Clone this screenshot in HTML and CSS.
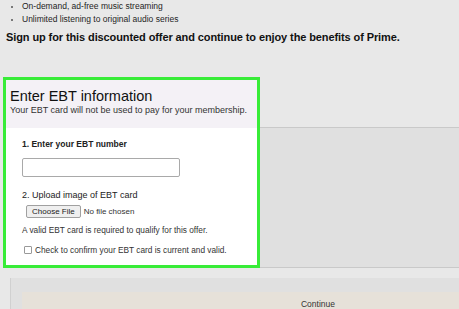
FILE: index.html
```html
<!DOCTYPE html>
<html lang="en">
<head>
    <meta charset="UTF-8">
    <meta name="viewport" content="width=device-width, initial-scale=1.0">
    <title>Prime EBT Offer</title>
    <link rel="stylesheet" href="styles.css">
</head>
<body>

<div class="intro">
    <ul class="perks">
        <li>On-demand, ad-free music streaming</li>
        <li>Unlimited listening to original audio series</li>
    </ul>
    <p class="pitch">Sign up for this discounted offer and continue to enjoy the benefits of Prime.</p>
</div>

<div class="ebt-row">
    <div class="ebt-box">
        <div class="ebt-head">
            <h2>Enter EBT information</h2>
            <p>Your EBT card will not be used to pay for your membership.</p>
        </div>
        <div class="ebt-body">
            <div class="step-label">1. Enter your EBT number</div>
            <input type="text" class="ebt-input">
            <div class="step-label step-upload">2. Upload image of EBT card</div>
            <div class="file-row">
                <span class="file-btn">Choose File</span>
                <span class="file-name">No file chosen</span>
            </div>
            <div class="note">A valid EBT card is required to qualify for this offer.</div>
            <label class="confirm">
                <span class="check"></span>
                Check to confirm your EBT card is current and valid.
            </label>
        </div>
    </div>
    <div class="ebt-side">
        <div class="side-top"></div>
        <div class="side-rest"></div>
    </div>
</div>

<div class="continue-panel">
    <div class="continue-btn">Continue</div>
</div>

</body>
</html>
```

FILE: styles.css
```css
body {
    margin: 0;
    background-color: #e8e8e8;
    font-family: "Liberation Sans", Arial, sans-serif;
    color: #1e1e1e;
    overflow: hidden;
    height: 309px;
}

.intro {
    height: 77px;
}

.perks {
    margin: 0;
    padding: 0 0 0 22px;
    font-size: 8.5px;
    line-height: 13px;
    white-space: nowrap;
}

.perks li::marker {
    font-size: 8px;
    color: #555;
}

.pitch {
    margin: 3px 0 0 6px;
    font-size: 11px;
    letter-spacing: -0.1px;
    font-weight: bold;
    line-height: 16px;
    color: #111;
    white-space: nowrap;
}

.ebt-row {
    display: flex;
    height: 191px;
}

.ebt-box {
    width: 251px;
    margin-left: 3px;
    border: 3px solid #38ec38;
    background-color: #ffffff;
    display: flex;
    flex-direction: column;
}

.ebt-head {
    height: 41px;
    padding: 7px 0 0 4px;
    background-color: #f4f1f6;
    white-space: nowrap;
}

.ebt-head h2 {
    margin: 0;
    font-size: 14.5px;
    line-height: 18px;
    font-weight: normal;
    color: #111;
}

.ebt-head p {
    margin: 0;
    font-size: 9px;
    line-height: 11px;
    color: #333;
}

.ebt-body {
    padding: 10px 0 0 16px;
    display: flex;
    flex-direction: column;
    align-items: flex-start;
    white-space: nowrap;
}

.step-label {
    font-size: 8.5px;
    line-height: 12px;
    font-weight: bold;
    color: #222;
}

.step-upload {
    margin-top: 12px;
    font-weight: normal;
    font-size: 9px;
}

.ebt-input {
    width: 158px;
    height: 19px;
    margin-top: 8px;
    padding: 0;
    box-sizing: border-box;
    border: 1px solid #a9a9a9;
    border-radius: 2px;
    background: #fff;
}

.file-row {
    margin-top: 4px;
    margin-left: 4px;
    display: flex;
    align-items: center;
    gap: 3px;
    font-size: 8px;
}

.file-btn {
    height: 13px;
    line-height: 11px;
    padding: 0 5px;
    box-sizing: border-box;
    border: 1px solid #a0a0a0;
    border-radius: 2px;
    background-color: #efefef;
    color: #222;
}

.file-name {
    color: #333;
}

.note {
    margin-top: 6px;
    font-size: 8.3px;
    line-height: 12px;
    color: #333;
}

.confirm {
    margin-top: 8px;
    margin-left: 2px;
    display: flex;
    align-items: center;
    gap: 3px;
    font-size: 8.3px;
    line-height: 12px;
    color: #333;
}

.check {
    width: 6px;
    height: 6px;
    border: 1px solid #999;
    border-radius: 1px;
    background: #fff;
}

.ebt-side {
    flex: 1;
    display: flex;
    flex-direction: column;
    border-bottom: 1px solid #c9c9c9;
}

.side-top {
    height: 50px;
    border-bottom: 1px solid #c9c9c9;
}

.side-rest {
    flex: 1;
    background-color: #e0e0e0;
}

.continue-panel {
    margin: 10px 0 0 10px;
    padding: 14px 0 0 11px;
    border-left: 1px solid #d0d0d0;
    background-color: #e0e0e0;
    height: 17px;
    overflow: hidden;
}

.continue-btn {
    width: 592px;
    height: 30px;
    padding-top: 7px;
    box-sizing: border-box;
    background-color: #e6e1d9;
    text-align: center;
    font-size: 8.5px;
    color: #333;
}
```
